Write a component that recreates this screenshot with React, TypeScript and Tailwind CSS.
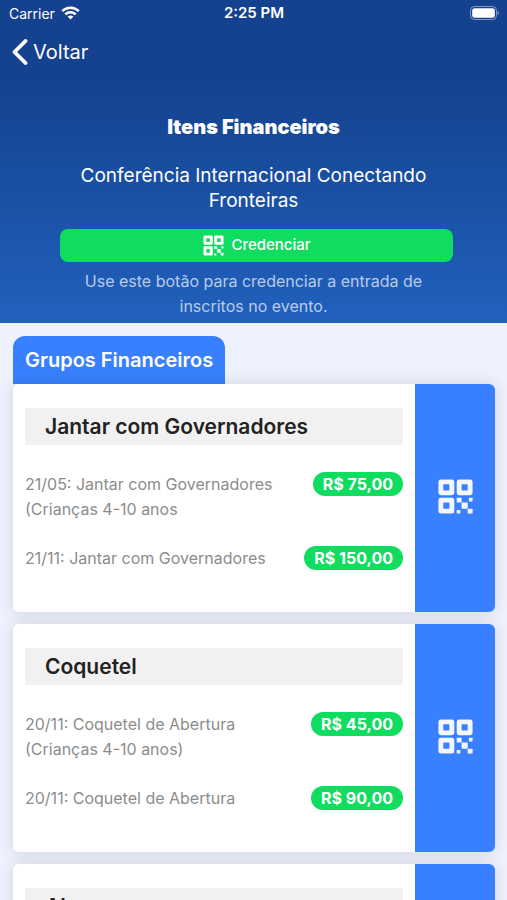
import React from 'react';
import { IoQrCode } from 'react-icons/io5';

type Item = { name: string; price: string };
type Group = { title: string; items: Item[] };

const groups: Group[] = [
  {
    title: 'Jantar com Governadores',
    items: [
      { name: '21/05: Jantar com Governadores (Crianças 4-10 anos', price: 'R$ 75,00' },
      { name: '21/11: Jantar com Governadores', price: 'R$ 150,00' },
    ],
  },
  {
    title: 'Coquetel',
    items: [
      { name: '20/11: Coquetel de Abertura (Crianças 4-10 anos)', price: 'R$ 45,00' },
      { name: '20/11: Coquetel de Abertura', price: 'R$ 90,00' },
    ],
  },
  {
    title: 'Almoço',
    items: [],
  },
];

function StatusBar() {
  return (
    <div className="grid grid-cols-3 items-center h-[26px] pl-[9px] pr-2 text-[14px]">
      <div className="flex items-center gap-1.5">
        <span>Carrier</span>
        <svg width="19" height="14" viewBox="0 0 19 14" fill="none" stroke="white" strokeWidth="2.5">
          <path d="M1.2 5.2C5.8 0.6 13.2 0.6 17.8 5.2" />
          <path d="M4.3 8.3C7.2 5.5 11.8 5.5 14.7 8.3" />
          <path d="M9.5 13.6L6.6 10.6C8.2 9 10.8 9 12.4 10.6Z" fill="white" stroke="none" />
        </svg>
      </div>
      <span className="text-center text-[15px] font-semibold">2:25 PM</span>
      <svg className="justify-self-end" width="29" height="14" viewBox="0 0 29 14">
        <rect x="0.5" y="0.5" width="26" height="13" rx="4" fill="none" stroke="white" strokeOpacity="0.45" />
        <rect x="2.2" y="2.2" width="22.6" height="9.6" rx="2.4" fill="white" />
        <path d="M27.6 5V9C29.2 8.4 29.2 5.6 27.6 5Z" fill="white" fillOpacity="0.5" />
      </svg>
    </div>
  );
}

function GroupCard({ group }: { group: Group }) {
  return (
    <section className="flex min-h-57 rounded-md overflow-hidden bg-white shadow-[0_0_16px_rgba(0,0,0,0.13)]">
      <div className="flex-1 px-3 pt-6 pb-8">
        <h3 className="bg-[#f1f1f1] rounded-xs px-5 py-1 text-[21px] leading-[29px] font-semibold text-[#222222]">
          {group.title}
        </h3>
        <ul className="mt-[27px] flex flex-col gap-6">
          {group.items.map((item) => (
            <li key={item.name} className="flex items-start justify-between">
              <span className="w-64 text-[16px] leading-[25px] text-[#8c8c8c]">{item.name}</span>
              <span className="rounded-full bg-[#10dc60] px-2.5 text-[16px] leading-6 font-bold text-white whitespace-nowrap">
                {item.price}
              </span>
            </li>
          ))}
        </ul>
      </div>
      <button
        type="button"
        aria-label={`Credenciar ${group.title}`}
        className="w-20 shrink-0 pb-1 flex items-center justify-center bg-[#3880ff] text-[#f4f6ff]"
      >
        <IoQrCode size={39} />
      </button>
    </section>
  );
}

export default function App() {
  return (
    <div className="h-screen flex flex-col overflow-hidden bg-[#eef2ff] font-['Inter','Liberation_Sans',sans-serif]">
      <header className="shrink-0 bg-linear-to-b from-[#14428e] from-25% to-[#2161be] text-white">
        <StatusBar />
        <nav className="h-13 px-3 flex items-center">
          <a href="#" className="flex items-center gap-[5px] text-[20px]">
            <svg width="16" height="26" viewBox="0 0 16 26" fill="none" stroke="white" strokeWidth="3.8" strokeLinecap="round" strokeLinejoin="round">
              <path d="M13.5 2L2.5 13L13.5 24" />
            </svg>
            Voltar
          </a>
        </nav>
        <div className="px-[54px] pt-[34px] pb-1 flex flex-col text-center">
          <h1 className="text-[20px] leading-[30px] font-black">Itens Financeiros</h1>
          <h2 className="mt-[21px] px-5 text-[19px] leading-[25px]">Conferência Internacional Conectando Fronteiras</h2>
          <button
            type="button"
            className="mt-4 ml-1.5 h-[33px] rounded-lg bg-[#10dc60] flex items-center justify-center gap-1.5 text-[15px] font-medium"
          >
            <IoQrCode size={23} />
            Credenciar
          </button>
          <p className="mt-[7px] px-6 text-[16px] leading-[25px] text-[#b9cbe9]">
            Use este botão para credenciar a entrada de inscritos no evento.
          </p>
        </div>
      </header>

      <main className="flex-1 min-h-0 overflow-y-auto [scrollbar-width:none] pl-[13px] pr-3 pt-[13px] pb-3">
        <h2 className="inline-block align-top rounded-t-xl bg-[#3880ff] px-3 py-3 text-[20px] leading-6 font-semibold text-white">
          Grupos Financeiros
        </h2>
        <div className="flex flex-col gap-3">
          {groups.map((group) => (
            <GroupCard key={group.title} group={group} />
          ))}
        </div>
      </main>
    </div>
  );
}
